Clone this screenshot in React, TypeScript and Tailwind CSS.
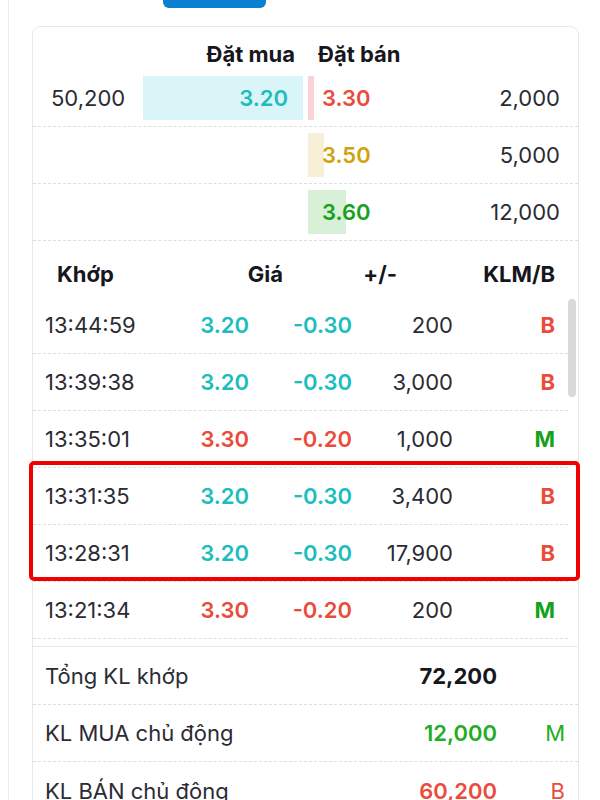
import React from 'react'

interface Level {
  bidVol?: number
  bidPrice?: string
  askPrice: string
  askVol: number
  askColor: string
  askBar: string
}

interface Trade {
  time: string
  price: string
  change: string
  vol: string
  side: 'B' | 'M'
}

const MAX_VOL = 50200
const BAR_MAX = 160

const levels: Level[] = [
  { bidVol: 50200, bidPrice: '3.20', askPrice: '3.30', askVol: 2000, askColor: 'text-[#ea4c3c]', askBar: 'bg-[#f9d3d5]' },
  { askPrice: '3.50', askVol: 5000, askColor: 'text-[#cfa30e]', askBar: 'bg-[#f7efd8]' },
  { askPrice: '3.60', askVol: 12000, askColor: 'text-[#16a11c]', askBar: 'bg-[#d7f0d7]' },
]

const trades: Trade[] = [
  { time: '13:44:59', price: '3.20', change: '-0.30', vol: '200', side: 'B' },
  { time: '13:39:38', price: '3.20', change: '-0.30', vol: '3,000', side: 'B' },
  { time: '13:35:01', price: '3.30', change: '-0.20', vol: '1,000', side: 'M' },
  { time: '13:31:35', price: '3.20', change: '-0.30', vol: '3,400', side: 'B' },
  { time: '13:28:31', price: '3.20', change: '-0.30', vol: '17,900', side: 'B' },
  { time: '13:21:34', price: '3.30', change: '-0.20', vol: '200', side: 'M' },
]

const fmt = (n: number) => n.toLocaleString('en-US')

const OrderRow: React.FC<{ level: Level }> = ({ level }) => (
  <div className="flex h-[57px] items-center border-b border-dashed border-[#dedede]">
    <div className="flex w-[272px] items-center justify-between pl-[18px] pr-[2px]">
      <span className="text-[#2b2b33]">{level.bidVol ? fmt(level.bidVol) : ''}</span>
      <div className="relative flex h-[44px] w-[160px] items-center justify-end pr-[15px]">
        {level.bidVol && (
          <div
            className="absolute right-0 top-0 h-full bg-[#d9f5f7]"
            style={{ width: (level.bidVol / MAX_VOL) * BAR_MAX }}
          />
        )}
        {level.bidPrice && (
          <span className="relative font-semibold text-[#1bbdbd]">{level.bidPrice}</span>
        )}
      </div>
    </div>
    <div className="flex flex-1 items-center justify-between pl-[3px] pr-[18px]">
      <div className="relative flex h-[44px] items-center pl-[14px]">
        <div
          className={`absolute left-0 top-0 h-full ${level.askBar}`}
          style={{ width: (level.askVol / MAX_VOL) * BAR_MAX }}
        />
        <span className={`relative font-semibold ${level.askColor}`}>{level.askPrice}</span>
      </div>
      <span className="text-[#2b2b33]">{fmt(level.askVol)}</span>
    </div>
  </div>
)

const TradeRow: React.FC<{ t: Trade }> = ({ t }) => {
  const up = t.side === 'M'
  const priceColor = up ? 'text-[#ea4c3c]' : 'text-[#1bbdbd]'
  return (
    <div className="grid h-[57px] grid-cols-[125px_79px_103px_101px_102px] items-center border-b border-dashed border-[#dedede] pl-[12px]">
      <span className="text-[#2b2b33]">{t.time}</span>
      <span className={`text-right font-semibold ${priceColor}`}>{t.price}</span>
      <span className={`text-right font-semibold ${priceColor}`}>{t.change}</span>
      <span className="text-right text-[#2b2b33]">{t.vol}</span>
      <span className={`text-right font-bold ${up ? 'text-[#16a11c]' : 'text-[#ea4c3c]'}`}>{t.side}</span>
    </div>
  )
}

export default function App() {
  return (
    <div
      className="relative h-[800px] w-[600px] overflow-hidden bg-white pl-2 text-[22px] leading-none"
      style={{ fontFamily: 'Inter, "Noto Sans", sans-serif' }}
    >
      <div className="h-full border-l border-[#ececec] pl-[23px] pr-[21px]">
        <div className="ml-[131px] h-[8px] w-[103px] rounded-b-[6px] bg-[#0b7fd1]" />
        <div className="mt-[18px] rounded-t-[9px] border border-b-0 border-[#e8e8e8]">
          {/* order book */}
          <div className="flex h-[43px] items-center pt-[11px] font-bold text-[#16161d]">
            <div className="w-[272px] pr-[10px] text-right">Đặt mua</div>
            <div className="pl-[13px]">Đặt bán</div>
          </div>
          {levels.map((l) => (
            <OrderRow key={l.askPrice} level={l} />
          ))}

          {/* trades */}
          <div className="grid h-[56px] grid-cols-[143px_83px_114px_158px] items-center pl-[24px] pt-[10px] font-bold text-[#16161d]">
            <span>Khớp</span>
            <span className="text-right">Giá</span>
            <span className="text-right">+/-</span>
            <span className="text-right">KLM/B</span>
          </div>
          <div className="flex h-[349px] overflow-hidden">
            <div className="flex-1">
              {trades.map((t) => (
                <TradeRow key={t.time} t={t} />
              ))}
            </div>
            <div className="w-[10px] pr-[1px] pt-[2px]">
              <div className="h-[98px] w-[8px] rounded-full bg-[#dadada]" />
            </div>
          </div>

          {/* summary */}
          <div className="border-t border-[#e8e8e8]">
            <div className="flex h-[58px] items-center border-b border-dashed border-[#dedede] pl-[12px]">
              <span className="w-[348px] text-[#2b2b33]">Tổng KL khớp</span>
              <span className="w-[104px] text-right font-bold text-[#16161d]">72,200</span>
            </div>
            <div className="flex h-[57px] items-center border-b border-dashed border-[#dedede] pl-[12px]">
              <span className="w-[348px] text-[#2b2b33]">KL MUA chủ động</span>
              <span className="w-[104px] text-right font-semibold text-[#22ad22]">12,000</span>
              <span className="w-[68px] text-right text-[#22ad22]">M</span>
            </div>
            <div className="flex h-[57px] items-center pl-[12px]">
              <span className="w-[348px] text-[#2b2b33]">KL BÁN chủ đông</span>
              <span className="w-[104px] text-right font-semibold text-[#ea4c3c]">60,200</span>
              <span className="w-[68px] text-right text-[#ea4c3c]">B</span>
            </div>
          </div>
        </div>
      </div>

      {/* highlight annotation */}
      <div className="pointer-events-none absolute left-[29px] top-[461px] h-[120px] w-[551px] rounded-[5px] border-4 border-[#f20000]" />
    </div>
  )
}
